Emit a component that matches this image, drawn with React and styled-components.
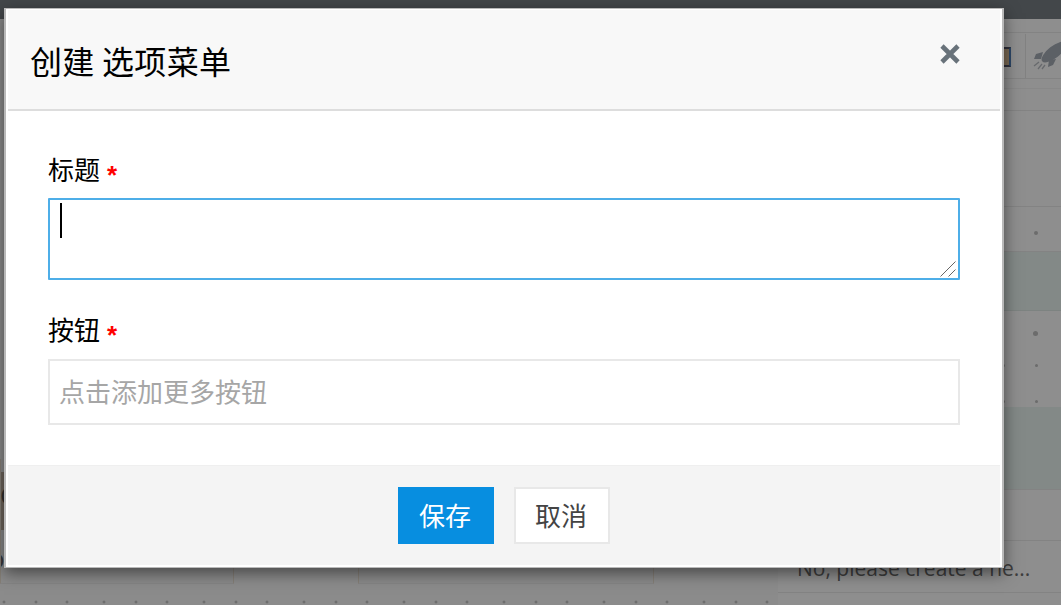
import React from "react";
import styled, { createGlobalStyle } from "styled-components";

const Global = createGlobalStyle`
  html, body { margin: 0; padding: 0; background: #f8f8f8; }
  * { box-sizing: border-box; }
  body { font-family: "Noto Sans CJK SC", "Noto Sans", sans-serif; }
`;

const Page = styled.div`
  position: relative;
  width: 1061px;
  height: 605px;
  overflow: hidden;
  display: flex;
  flex-direction: column;
  background: #f8f8f8;
`;
const TopBar = styled.div`
  height: 19px;
  flex: none;
  background: #787f85;
`;
const Workspace = styled.div`
  flex: 1;
  display: flex;
  min-height: 0;
`;
const Canvas = styled.div`
  width: 778px;
  flex: none;
  display: flex;
  flex-direction: column;
  justify-content: flex-end;
`;
const CardRow = styled.div`
  display: flex;
  height: 125px;
`;
const Card = styled.div`
  width: ${(p) => p.$w}px;
  margin-right: ${(p) => p.$gap}px;
  background: #f6f6f6;
  border-left: 1px solid #eee2d4;
  border-right: 1px solid #eee2d4;
  border-bottom: 1px solid #ececec;
  overflow: hidden;
`;
const Thumb = styled.div`
  height: 58px;
  width: 4px;
  margin: 13px 0 0 -1px;
  background: #c4b4a4;
  color: #555;
  font: 26px/46px "Open Sans", sans-serif;
  overflow: hidden;
`;
const CardText = styled.div`
  margin: 15px 0 0 -12px;
  color: #666;
  font: 26px/26px "Open Sans", sans-serif;
`;
const DotStrip = styled.div`
  height: 21px;
  background-image: radial-gradient(circle, #c4c4c4 1.3px, transparent 1.7px),
    radial-gradient(circle, #c4c4c4 1.3px, transparent 1.7px),
    radial-gradient(circle, #c4c4c4 1.3px, transparent 1.7px);
  background-size: 100px 6px;
  background-repeat: repeat-x;
  background-position: -46px 15px, -14px 15px, 17px 15px;
`;
const Side = styled.div`
  flex: 1;
  display: flex;
  flex-direction: column;
  background: #fdfdfd;
`;
const SideRow = styled.div`
  height: ${(p) => p.$h}px;
  flex: none;
  background: ${(p) => p.$bg || "transparent"};
  border-bottom: 1px solid ${(p) => p.$line || "#eaeaea"};
  display: flex;
  align-items: center;
  justify-content: flex-end;
  gap: 30px;
  padding: 0 23px 0 0;
`;
const Dot = styled.i`
  width: ${(p) => p.$s}px;
  height: ${(p) => p.$s}px;
  border-radius: 50%;
  background: #c0c0c0;
  transform: translateY(${(p) => p.$y || 0}px);
`;
const Toolbar = styled.div`
  height: 46px;
  flex: none;
  display: flex;
  align-items: center;
  justify-content: flex-end;
  border-bottom: 1px solid #eaeaea;
`;
const ColorBox = styled.div`
  width: 20px;
  height: 20px;
  margin: 3px 14px 0 0;
  background: #d8bc94;
  border: 2px solid #556;
  border-right-color: #4f7fb8;
`;
const Divider = styled.div`
  width: 1px;
  height: 44px;
  background: #e8e8e8;
`;
const RocketWrap = styled.div`
  width: 35px;
  height: 44px;
  flex: none;
  overflow: hidden;
`;
const PanelText = styled.div`
  height: 52px;
  flex: none;
  padding: 14px 0 0 19px;
  color: #6e6e6e;
  font: 21px/26px "Open Sans", sans-serif;
  white-space: nowrap;
  border-bottom: 1px solid #eaeaea;
`;

const Overlay = styled.div`
  position: absolute;
  inset: 0;
  background: rgba(0, 0, 0, 0.44);
`;
const Modal = styled.div`
  position: absolute;
  left: 4px;
  top: 8px;
  width: 1000px;
  height: 560px;
  background: #fff;
  border: 2px solid #b9b9b9;
  border-top-width: 1px;
  border-bottom-width: 1px;
  padding: 1px 2px 2px;
  display: flex;
  flex-direction: column;
  box-shadow: 0 5px 15px rgba(0, 0, 0, 0.5);
`;
const Header = styled.div`
  height: 101px;
  flex: none;
  display: flex;
  align-items: center;
  justify-content: space-between;
  padding: 1px 40px 0 22px;
  background: #f8f8f8;
  border-bottom: 2px solid #dddddd;
`;
const Title = styled.h3`
  margin: 0;
  color: #000;
  font-size: 32px;
  font-weight: 400;
  line-height: 44px;
  letter-spacing: 0.3px;
`;
const Close = styled.button`
  width: 20px;
  height: 20px;
  padding: 0;
  border: 0;
  background: none;
  display: flex;
  margin-top: -13px;
`;
const Body = styled.div`
  flex: 1;
  padding: 43px 40px 0;
`;
const Field = styled.div`
  position: relative;
  margin-bottom: 34px;
`;
const Label = styled.label`
  display: block;
  height: 34px;
  margin-bottom: ${(p) => p.$mb}px;
  color: #000;
  font-size: 26px;
  line-height: 30px;
`;
const Star = styled.span`
  margin-left: 7px;
  color: #f00;
  font-family: "Liberation Sans", sans-serif;
  font-size: 26px;
  font-weight: 700;
  vertical-align: -4px;
`;
const TextArea = styled.textarea`
  display: block;
  width: 912px;
  height: 82px;
  padding: 4px 10px;
  margin: 0;
  border: 2px solid #4eaee8;
  outline: 0;
  border-radius: 1px;
  background: #fff;
  font: 26px "Noto Sans CJK SC", sans-serif;
  resize: none;
`;
const Caret = styled.span`
  position: absolute;
  left: 12px;
  top: 49px;
  width: 2px;
  height: 35px;
  background: #000;
`;
const Grip = styled.svg`
  position: absolute;
  left: 892px;
  top: 107px;
`;
const TextInput = styled.input`
  display: block;
  width: 912px;
  height: 66px;
  padding: 0 9px 4px;
  margin: 0;
  border: 2px solid #e8e8e8;
  outline: 0;
  background: #fff;
  font: 26px "Noto Sans CJK SC", sans-serif;
  &::placeholder {
    color: #a6a6a6;
    opacity: 1;
  }
`;
const Footer = styled.div`
  height: 100px;
  flex: none;
  display: flex;
  justify-content: center;
  gap: 20px;
  padding-top: 21px;
  background: #f4f4f4;
  border-top: 1px solid #efefef;
`;
const Button = styled.button`
  width: 96px;
  height: 57px;
  padding: 0 2px 2px 0;
  font: 26px/1 "Noto Sans CJK SC", sans-serif;
  color: ${(p) => (p.$primary ? "#fff" : "#444")};
  background: ${(p) => (p.$primary ? "#078ee0" : "#fff")};
  border: 2px solid ${(p) => (p.$primary ? "#078ee0" : "#e8e8e8")};
`;

export default function App() {
  return (
    <Page>
      <Global />
      <TopBar />
      <Workspace>
        <Canvas>
          <CardRow>
            <Card $w={234} $gap={124}>
              <Thumb>C</Thumb>
              <CardText>o</CardText>
            </Card>
            <Card $w={296} $gap={0} />
          </CardRow>
          <DotStrip />
        </Canvas>
        <Side>
          <SideRow $h={14} />
          <Toolbar>
            <ColorBox />
            <Divider />
            <RocketWrap>
              <svg width="35" height="44" viewBox="0 0 35 44">
                <ellipse cx="28" cy="18" rx="15" ry="6" transform="rotate(-38 28 18)" fill="#a4abb5" />
                <path d="M17 18 L10 20 L8 25 L15 25 Z M23 26 L22 33 L27 31 L30 25 Z" fill="#a4abb5" />
                <path d="M13 28 L8 32 M16 30 L12 35 M19 31 L16 35" stroke="#b8bcc2" strokeWidth="1.3" fill="none" />
              </svg>
            </RocketWrap>
          </Toolbar>
          <SideRow $h={10} $line="#f2f2f2" />
          <SideRow $h={22} />
          <SideRow $h={96} />
          <SideRow $h={45}>
            <Dot $s={4} $y={4} />
            <Dot $s={4} $y={4} />
          </SideRow>
          <SideRow $h={59} $bg="#eaf4f1" $line="#dfe9e6" />
          <SideRow $h={39} $line="transparent">
            <Dot $s={5} $y={3} />
            <Dot $s={5} $y={3} />
          </SideRow>
          <SideRow $h={31} $line="transparent">
            <Dot $s={3} />
            <Dot $s={3} />
          </SideRow>
          <SideRow $h={26} $line="transparent">
            <Dot $s={3} $y={8} />
            <Dot $s={3} $y={8} />
          </SideRow>
          <SideRow $h={83} $bg="#eaf4f1" />
          <SideRow $h={51} />
          <PanelText>No, please create a ne...</PanelText>
        </Side>
      </Workspace>
      <Overlay />
      <Modal>
        <Header>
          <Title>创建 选项菜单</Title>
          <Close aria-label="close">
            <svg width="20" height="20" viewBox="0 0 20 20">
              <path d="M2 2 L18 18 M18 2 L2 18" stroke="#68727a" strokeWidth="4.6" fill="none" />
            </svg>
          </Close>
        </Header>
        <Body>
          <Field>
            <Label $mb={10}>
              标题<Star>*</Star>
            </Label>
            <TextArea readOnly />
            <Caret />
            <Grip width="16" height="16" viewBox="0 0 16 16">
              <path d="M0.5 15.5 L15.5 0.5 M8.5 15.5 L15.5 8.5" stroke="#666" strokeWidth="1" fill="none" />
            </Grip>
          </Field>
          <Field>
            <Label $mb={11}>
              按钮<Star>*</Star>
            </Label>
            <TextInput readOnly placeholder="点击添加更多按钮" />
          </Field>
        </Body>
        <Footer>
          <Button $primary>保存</Button>
          <Button>取消</Button>
        </Footer>
      </Modal>
    </Page>
  );
}
